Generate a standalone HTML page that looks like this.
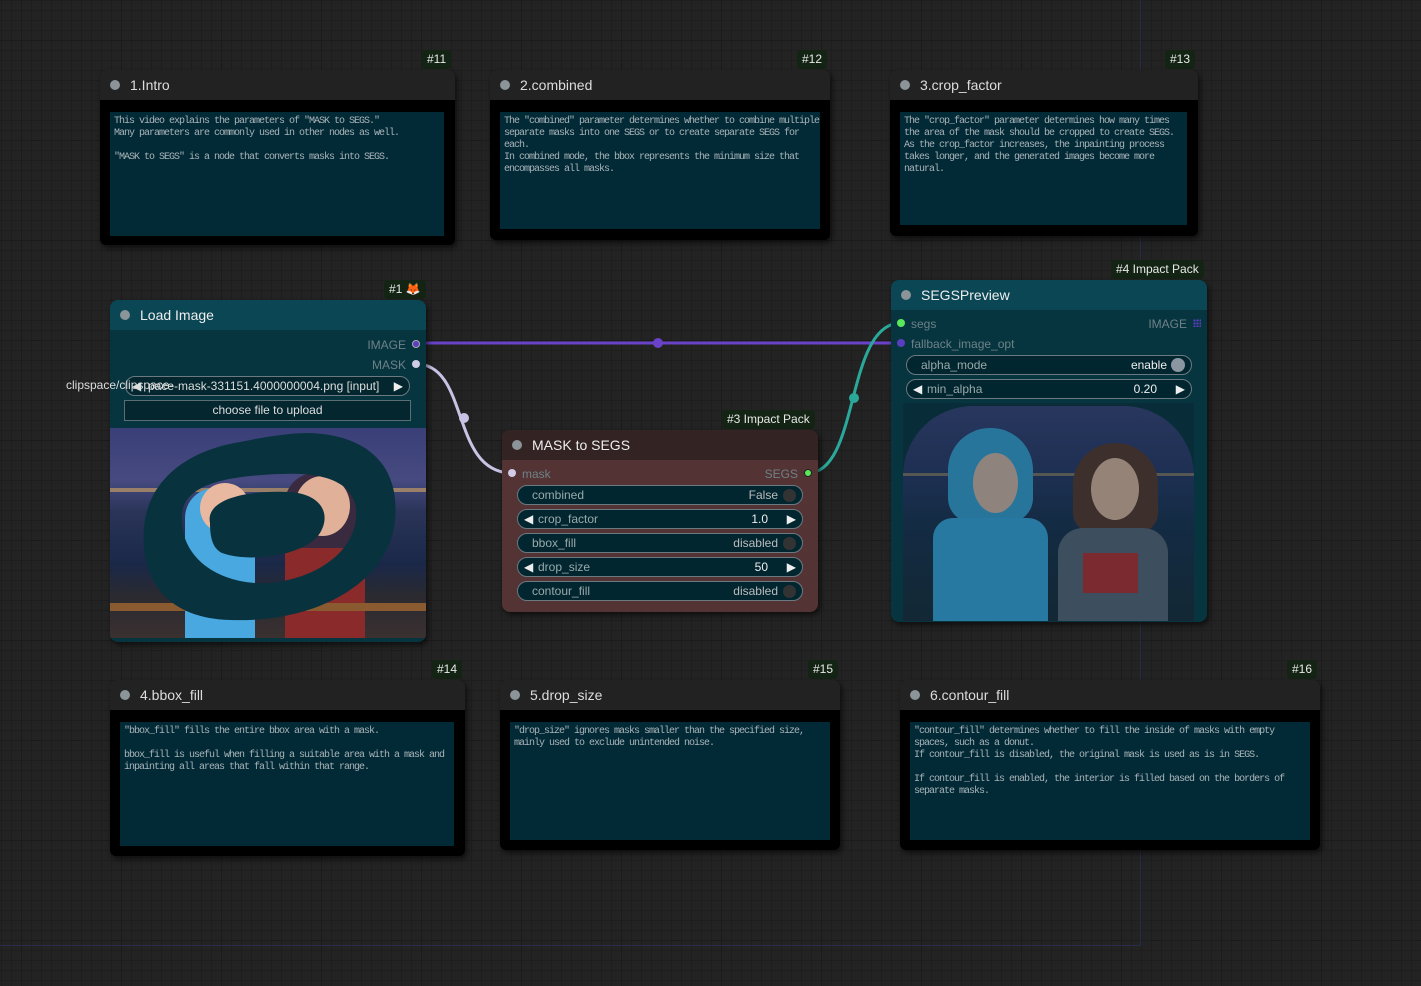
<!DOCTYPE html>
<html><head><meta charset="utf-8"><style>
*{margin:0;padding:0;box-sizing:border-box}
body{width:1421px;height:986px;overflow:hidden;position:relative;font-family:"Liberation Sans",sans-serif;
background-color:#232323;
background-image:
linear-gradient(90deg,#1b1b1b 1px,transparent 1px),
linear-gradient(#1b1b1b 1px,transparent 1px),
linear-gradient(90deg,#1e1e1e 1px,transparent 1px),
linear-gradient(#1e1e1e 1px,transparent 1px);
background-size:100px 100px,100px 100px,10px 10px,10px 10px;
background-position:21px 0,0 40px,1px 0,0 0;}
.abs{position:absolute}
.badge{position:absolute;background:#142414;color:#e8e8e8;font-size:12px;padding:2px 5px;border-radius:4px;height:19px;line-height:15px}
.note{position:absolute;background:#000;border-radius:6px;box-shadow:2px 3px 6px rgba(0,0,0,.6)}
.note .t{height:30px;background:#222;border-radius:6px 6px 0 0;color:#ddd;font-size:14px;line-height:30px;padding-left:30px;position:relative}
.dot{position:absolute;left:10px;top:10px;width:10px;height:10px;border-radius:50%;background:#8a9499}
.ta{position:absolute;background:#022936;color:#a9b4b8;font-family:"Liberation Mono","DejaVu Sans Mono",monospace;font-size:10px;line-height:12px;padding:4px 4px;white-space:pre;overflow:hidden;letter-spacing:-1px}
.node{position:absolute;border-radius:8px;box-shadow:2px 3px 6px rgba(0,0,0,.6);overflow:hidden}
.node .t{height:30px;font-size:14px;line-height:30px;color:#eee;padding-left:30px;position:relative}
.w{position:absolute;height:20px;border:1px solid #6a7a80;border-radius:10px;background:#022630;color:#aab;font-size:12px;line-height:18px}
.w .l{position:absolute;left:14px;color:#9aa}
.w .r{position:absolute;right:24px;color:#bbb}
.w .tg{position:absolute;right:6px;top:3px;width:13px;height:13px;border-radius:50%;background:#333}
.lbl{position:absolute;font-size:12px;color:#6e8288}
.sd{position:absolute;width:8px;height:8px;border-radius:50%}
</style></head><body>
<div class="abs" style="left:1140px;top:0;width:1px;height:946px;background:#262d4c"></div>
<div class="abs" style="left:0;top:945px;width:1141px;height:1px;background:#262d4c"></div>

<div class="badge" style="left:422px;top:50px">#11</div>
<div class="note" style="left:100px;top:70px;width:355px;height:175px"><div class="t"><span class="dot"></span>1.Intro</div>
<div class="ta" style="left:10px;top:42px;width:334px;height:124px">This video explains the parameters of "MASK to SEGS."
Many parameters are commonly used in other nodes as well.

"MASK to SEGS" is a node that converts masks into SEGS.</div></div>

<div class="badge" style="left:797px;top:50px">#12</div>
<div class="note" style="left:490px;top:70px;width:340px;height:170px"><div class="t"><span class="dot"></span>2.combined</div>
<div class="ta" style="left:10px;top:42px;width:320px;height:117px">The "combined" parameter determines whether to combine multiple
separate masks into one SEGS or to create separate SEGS for
each.
In combined mode, the bbox represents the minimum size that
encompasses all masks.</div></div>

<div class="badge" style="left:1165px;top:50px">#13</div>
<div class="note" style="left:890px;top:70px;width:308px;height:166px"><div class="t"><span class="dot"></span>3.crop_factor</div>
<div class="ta" style="left:10px;top:42px;width:287px;height:113px">The "crop_factor" parameter determines how many times
the area of the mask should be cropped to create SEGS.
As the crop_factor increases, the inpainting process
takes longer, and the generated images become more
natural.</div></div>

<div class="badge" style="left:432px;top:660px">#14</div>
<div class="note" style="left:110px;top:680px;width:355px;height:176px"><div class="t"><span class="dot"></span>4.bbox_fill</div>
<div class="ta" style="left:10px;top:42px;width:334px;height:124px">"bbox_fill" fills the entire bbox area with a mask.

bbox_fill is useful when filling a suitable area with a mask and
inpainting all areas that fall within that range.</div></div>

<div class="badge" style="left:808px;top:660px">#15</div>
<div class="note" style="left:500px;top:680px;width:340px;height:170px"><div class="t"><span class="dot"></span>5.drop_size</div>
<div class="ta" style="left:10px;top:42px;width:320px;height:118px">"drop_size" ignores masks smaller than the specified size,
mainly used to exclude unintended noise.</div></div>

<div class="badge" style="left:1287px;top:660px">#16</div>
<div class="note" style="left:900px;top:680px;width:420px;height:170px"><div class="t"><span class="dot"></span>6.contour_fill</div>
<div class="ta" style="left:10px;top:42px;width:400px;height:118px">"contour_fill" determines whether to fill the inside of masks with empty
spaces, such as a donut.
If contour_fill is disabled, the original mask is used as is in SEGS.

If contour_fill is enabled, the interior is filled based on the borders of
separate masks.</div></div>

<svg class="abs" style="left:0;top:0" width="1421" height="986">
<path d="M425 343 L891 343" stroke="#6a42c8" stroke-width="3" fill="none"/>
<circle cx="658" cy="343" r="5" fill="#6a42c8"/>
<path d="M416 364 C470 364 450 473 512 473" stroke="#c8c2e4" stroke-width="3" fill="none"/>
<circle cx="464" cy="418" r="5" fill="#c8c2e4"/>
<path d="M808 473 C860 473 845 323 901 323" stroke="#2aa89a" stroke-width="3" fill="none"/>
<circle cx="854" cy="398" r="5" fill="#2aa89a"/>
</svg>

<div class="badge" style="left:384px;top:280px">#1 <span style="color:#f07a20">🦊</span></div>
<div class="node" style="left:110px;top:300px;width:316px;height:342px;background:#06343f">
<div class="t" style="background:#0b4655"><span class="dot"></span>Load Image</div>
<div class="lbl" style="right:20px;top:38px">IMAGE</div><div class="sd" style="right:6px;top:40px;background:#5a3ec0;border:1px solid #aaa"></div>
<div class="lbl" style="right:20px;top:58px">MASK</div><div class="sd" style="right:6px;top:60px;background:#d0cbe6"></div>
<div class="w" style="left:15px;top:76px;width:285px;background:#03262f"><span style="position:absolute;left:6px;color:#ddd">◀</span><span style="position:absolute;left:22px;color:#ddd;white-space:nowrap">pace-mask-331151.4000000004.png [input]</span><span style="position:absolute;right:6px;color:#eee">▶</span></div>
<div class="abs" style="left:14px;top:100px;width:287px;height:21px;border:1px solid #5a6e74;background:#03262f;color:#ddd;font-size:12px;text-align:center;line-height:19px">choose file to upload</div>
<div class="abs" style="left:0;top:128px;width:316px;height:210px;overflow:hidden;background:linear-gradient(180deg,#3a3f78 0%,#464a80 25%,#2a3458 40%,#1a2848 65%,#2a2a30 80%,#3a3030 100%)">
<div class="abs" style="left:0;top:60px;width:316px;height:4px;background:#d8a860;opacity:.6"></div>
<div class="abs" style="left:75px;top:60px;width:70px;height:150px;background:#4aa8e0;border-radius:30px 30px 0 0"></div>
<div class="abs" style="left:90px;top:55px;width:50px;height:50px;background:#e8b8a0;border-radius:50%"></div>
<div class="abs" style="left:175px;top:45px;width:80px;height:165px;background:#3a2a40;border-radius:30px 30px 0 0"></div>
<div class="abs" style="left:185px;top:48px;width:55px;height:60px;background:#e0b098;border-radius:50%"></div>
<div class="abs" style="left:175px;top:120px;width:80px;height:90px;background:#8a2a2a"></div>
<div class="abs" style="left:0;top:175px;width:316px;height:8px;background:#8a5a30"></div>
<svg class="abs" style="left:0;top:0" width="316" height="210"><path d="M200 5 C270 8 292 50 284 100 C272 160 200 195 120 192 C55 190 30 150 34 100 C38 50 80 22 130 14 C160 8 180 5 200 5 Z M72 85 C68 130 110 158 160 155 C210 150 250 120 246 80 C242 52 210 44 170 46 C120 48 76 55 72 85 Z" fill="#07323e" fill-rule="evenodd"/><path d="M100 95 C95 70 140 62 180 64 C210 66 222 85 210 105 C195 128 140 135 112 125 C102 120 100 108 100 95Z" fill="#07323e"/></svg>
</div></div>
<div class="abs" style="left:66px;top:378px;color:#ddd;font-size:12px;white-space:nowrap">clipspace/clipspace-</div>

<div class="badge" style="left:722px;top:410px">#3 Impact Pack</div>
<div class="node" style="left:502px;top:430px;width:316px;height:182px;background:#533333">
<div class="t" style="background:#332323"><span class="dot"></span>MASK to SEGS</div>
<div class="sd" style="left:6px;top:39px;background:#d0cbe6"></div><div class="lbl" style="left:20px;top:37px">mask</div>
<div class="lbl" style="right:20px;top:37px">SEGS</div><div class="sd" style="right:6px;top:39px;background:#5ae85a;border:1px solid #222"></div>
<div class="w" style="left:15px;top:55px;width:286px"><span class="l">combined</span><span class="r">False</span><span class="tg"></span></div>
<div class="w" style="left:15px;top:79px;width:286px"><span style="position:absolute;left:6px;color:#eee">◀</span><span class="l" style="left:20px">crop_factor</span><span class="r" style="right:34px;color:#eee">1.0</span><span style="position:absolute;right:6px;color:#eee">▶</span></div>
<div class="w" style="left:15px;top:103px;width:286px"><span class="l">bbox_fill</span><span class="r">disabled</span><span class="tg"></span></div>
<div class="w" style="left:15px;top:127px;width:286px"><span style="position:absolute;left:6px;color:#eee">◀</span><span class="l" style="left:20px">drop_size</span><span class="r" style="right:34px;color:#eee">50</span><span style="position:absolute;right:6px;color:#eee">▶</span></div>
<div class="w" style="left:15px;top:151px;width:286px"><span class="l">contour_fill</span><span class="r">disabled</span><span class="tg"></span></div>
</div>

<div class="badge" style="left:1111px;top:260px">#4 Impact Pack</div>
<div class="node" style="left:891px;top:280px;width:316px;height:342px;background:#06343f">
<div class="t" style="background:#0b4655"><span class="dot"></span>SEGSPreview</div>
<div class="sd" style="left:6px;top:39px;background:#5ae85a"></div><div class="lbl" style="left:20px;top:37px">segs</div>
<div class="sd" style="left:6px;top:59px;background:#5a3ec0"></div><div class="lbl" style="left:20px;top:57px">fallback_image_opt</div>
<div class="lbl" style="right:20px;top:37px">IMAGE</div><div class="abs" style="right:6px;top:39px;width:8px;height:8px;background:radial-gradient(circle,#5a3ec0 1px,transparent 1.3px) 0 0/3px 3px"></div>
<div class="w" style="left:15px;top:75px;width:286px"><span class="l">alpha_mode</span><span class="r" style="color:#eee">enable</span><span class="tg" style="background:#8a96a0;width:14px;height:14px;top:2px"></span></div>
<div class="w" style="left:15px;top:99px;width:286px"><span style="position:absolute;left:6px;color:#eee">◀</span><span class="l" style="left:20px">min_alpha</span><span class="r" style="right:34px;color:#eee">0.20</span><span style="position:absolute;right:6px;color:#eee">▶</span></div>
<div class="abs" style="left:12px;top:123px;width:291px;height:218px;background:#082c36;overflow:hidden">
<div class="abs" style="left:0;top:3px;width:291px;height:215px;border-radius:70px 70px 0 0;background:linear-gradient(180deg,#3a3a70 0%,#2a3060 30%,#1a2848 55%,#1a2430 100%)"></div>
<div class="abs" style="left:0;top:70px;width:291px;height:3px;background:#d8a860;opacity:.5"></div>
<div class="abs" style="left:45px;top:25px;width:85px;height:95px;background:#3a9ad0;border-radius:42px 42px 25px 25px"></div>
<div class="abs" style="left:70px;top:50px;width:45px;height:60px;background:#d8b0a0;border-radius:50%"></div>
<div class="abs" style="left:30px;top:115px;width:115px;height:103px;background:#3aa0d8;border-radius:20px 20px 0 0"></div>
<div class="abs" style="left:170px;top:40px;width:85px;height:90px;background:#5a3024;border-radius:42px 42px 20px 20px"></div>
<div class="abs" style="left:188px;top:55px;width:48px;height:62px;background:#e0b098;border-radius:50%"></div>
<div class="abs" style="left:155px;top:125px;width:110px;height:93px;background:#5a6070;border-radius:25px 25px 0 0"></div>
<div class="abs" style="left:180px;top:150px;width:55px;height:40px;background:#b82828"></div>
<div class="abs" style="left:0;top:0;width:291px;height:218px;background:rgba(8,50,60,.35)"></div>
</div>
</div>
</body></html>
